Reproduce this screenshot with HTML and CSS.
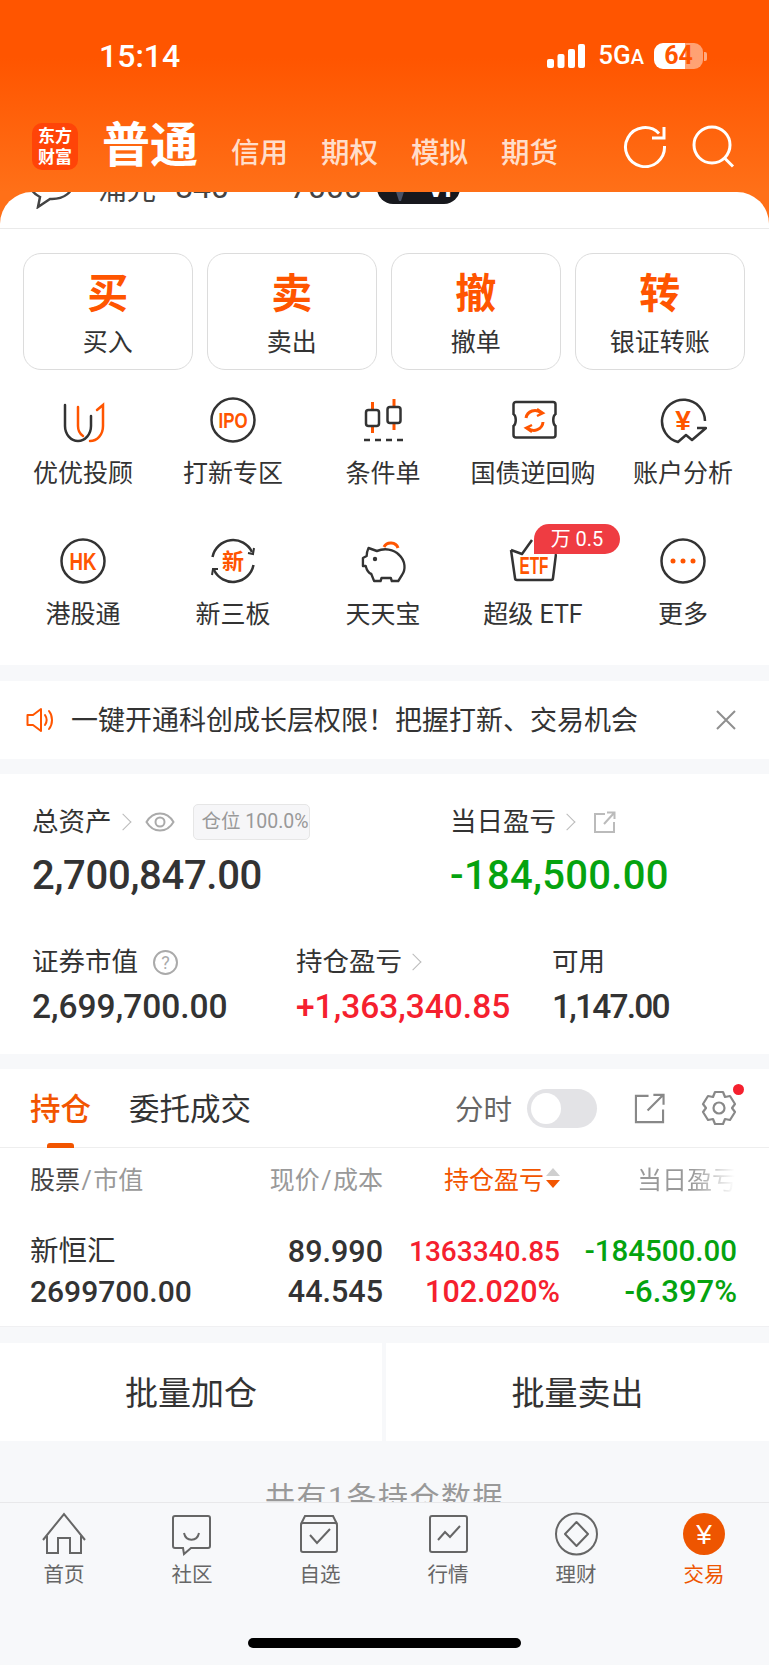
FILE: index.html
```html
<!DOCTYPE html>
<html lang="zh-CN">
  <head>
    <meta charset="UTF-8" />
    <meta name="viewport" content="width=device-width, initial-scale=1.0" />
    <title>交易</title>
    <link rel="stylesheet" href="styles.css">
  </head>
  <body>
    <div class="page">
      <div class="header">
        <div class="status">
          <span class="time">15:14</span>
          <div class="status-right">
            <svg class="signal" viewBox="0 0 38 24" fill="#fff">
              <rect x="0" y="15" width="7" height="9" rx="2"/>
              <rect x="10.500" y="10" width="7" height="14" rx="2"/>
              <rect x="21" y="5" width="7" height="19" rx="2"/>
              <rect x="31" y="0" width="7" height="24" rx="2"/>
            </svg>
            <span class="net">5G<small>A</small></span>
            <span class="battery">64</span>
            <span class="nib"></span>
          </div>
        </div>
        <div class="nav">
          <div class="logo">东方<br>财富</div>
          <span class="nav-main">普通</span>
          <span class="nav-sub">信用</span>
          <span class="nav-sub">期权</span>
          <span class="nav-sub">模拟</span>
          <span class="nav-sub">期货</span>
          <div class="nav-icons">
            <svg width="44" height="44" viewBox="0 0 44 44" fill="none" stroke="#fff" stroke-width="3">
              <path d="M36 9.500A19.500 19.500 0 1 0 41.500 22"/>
              <path d="M29 14H41V3"/>
            </svg>
            <svg width="45" height="45" viewBox="0 0 45 45" fill="none" stroke="#fff" stroke-width="3">
              <circle cx="21" cy="21" r="18"/>
              <path d="M33.500 34L42 42.500"/>
            </svg>
          </div>
        </div>
      </div>

      <div class="card-wrap">
        <div class="ticker">
          <div class="ticker-row">
            <svg class="bubble" width="46" height="44" viewBox="0 0 46 44" fill="none" stroke="#444" stroke-width="2.500">
              <path d="M23 2C11 2 2 9 2 18c0 6 4 11 10 14l-2 10 12-8h2c12 0 21-7 21-16S35 2 23 2z"/>
            </svg>
            <span class="ticker-name">涌光</span>
            <span class="ticker-a">840</span>
            <span class="ticker-b">7000</span>
            <span class="ticker-pill">
              <svg width="30" height="30" viewBox="0 0 30 30"><path d="M5 0h20l-9 28h-2z" fill="#4a5266"/></svg>
              <b>VI</b>
            </span>
            <span class="ticker-more"></span>
          </div>
        </div>
      </div>

      <div class="panel">
        <div class="actions">
          <div class="action"><b>买</b><span>买入</span></div>
          <div class="action"><b>卖</b><span>卖出</span></div>
          <div class="action"><b>撤</b><span>撤单</span></div>
          <div class="action"><b>转</b><span>银证转账</span></div>
        </div>

        <div class="grid">
          <div class="cell">
            <svg class="ico" viewBox="0 0 48 48" fill="none" stroke-width="2.500" stroke-linecap="round">
              <path d="M6 9V30a13 15 0 0 0 26 0V20" stroke="#333"/>
              <path d="M19 11V30c0 6 2 8 5 10" class="o"/>
              <path d="M38 14l6-5V30c0 9-6 15-13 15" class="o"/>
            </svg>
            <span>优优投顾</span>
          </div>
          <div class="cell">
            <svg class="ico" viewBox="0 0 48 48">
              <circle cx="24" cy="24" r="21.500" fill="none" stroke="#333" stroke-width="2.500"/>
              <text x="24" y="32" class="ico-text" font-size="22" textLength="29" lengthAdjust="spacingAndGlyphs">IPO</text>
            </svg>
            <span>打新专区</span>
          </div>
          <div class="cell">
            <svg class="ico" viewBox="0 0 48 48" fill="none" stroke-width="2.500">
              <path d="M13.500 6V37M35 3V34" class="o" stroke-width="3"/>
              <rect x="7" y="14" width="13" height="16" rx="2.500" fill="#fff" stroke="#333"/>
              <rect x="28.500" y="11" width="13" height="16" rx="2.500" fill="#fff" stroke="#333"/>
              <path d="M5 44H45" stroke="#333" stroke-dasharray="6 5"/>
            </svg>
            <span>条件单</span>
          </div>
          <div class="cell">
            <svg class="ico" viewBox="0 0 48 48" fill="none" stroke-width="2.500">
              <path d="M7 6H44a2.500 2.500 0 0 1 2.500 2.500V18c-3 2-3 10 0 12v9a2.500 2.500 0 0 1-2.500 2.500H7A2.500 2.500 0 0 1 4.500 39V30c3-2 3-10 0-12V8.500A2.500 2.500 0 0 1 7 6z" stroke="#333"/>
              <path d="M17 22a9 9 0 0 1 15-5M34 26a9 9 0 0 1-15 6" class="o" stroke-width="3"/>
              <path d="M28 13l6 4-6 3M23 29l-6 3 6 4" class="o" stroke-width="2.500"/>
            </svg>
            <span>国债逆回购</span>
          </div>
          <div class="cell">
            <svg class="ico" viewBox="0 0 48 48" fill="none" stroke="#333" stroke-width="2.500" stroke-linejoin="round">
              <path d="M46 25A21.500 21.500 0 1 0 19 46L27 39l6 5L47 32H38"/>
              <text x="24" y="34" class="ico-text" font-size="28" stroke="none">¥</text>
            </svg>
            <span>账户分析</span>
          </div>

          <div class="cell">
            <svg class="ico" viewBox="0 0 48 48">
              <circle cx="24" cy="24" r="21.500" fill="none" stroke="#333" stroke-width="2.500"/>
              <text x="24" y="32.500" class="ico-text" font-size="23.500" textLength="27" lengthAdjust="spacingAndGlyphs">HK</text>
            </svg>
            <span>港股通</span>
          </div>
          <div class="cell">
            <svg class="ico" viewBox="0 0 48 48" fill="none" stroke="#333" stroke-width="2.500">
              <path d="M3.500 20A21 21 0 0 1 43 15M44.500 28A21 21 0 0 1 5 33"/>
              <path d="M39 16l5 1 1-6M9 32l-5 0-1 6" stroke-width="2"/>
              <text x="24" y="32" class="ico-text ico-cjk" font-size="22" stroke="none">新</text>
            </svg>
            <span>新三板</span>
          </div>
          <div class="cell">
            <svg class="ico" viewBox="0 0 48 48" fill="none" stroke="#333" stroke-width="2.500" stroke-linejoin="round">
              <path d="M25 10a7.500 7 0 0 1 14 1" class="o" stroke-width="3"/>
              <path transform="translate(3 0) scale(.93 1)" d="M7 11l9 3c8-3 18-2 24 4 7 6 7 15 3 20l-4 6h-7l-1-3H21l-1 3h-7l-3-7c-3-1-5-4-6-8H1v-8l4-2c0-3 1-6 2-8z"/>
              <circle cx="16" cy="22" r="2.200" fill="#333" stroke="none"/>
            </svg>
            <span>天天宝</span>
          </div>
          <div class="cell">
            <svg class="ico" viewBox="0 0 48 48" fill="none" stroke="#333" stroke-width="2.500" stroke-linejoin="round">
              <path d="M2 13l11 4L23 3M2 13l4 28q0 2 2 2H42q2 0 2-2L47 17"/>
              <text x="25" y="37" class="ico-text" font-size="23" textLength="29" lengthAdjust="spacingAndGlyphs" stroke="none">ETF</text>
            </svg>
            <span>超级 ETF</span>
            <em class="tag">万 0.5</em>
          </div>
          <div class="cell">
            <svg class="ico" viewBox="0 0 48 48">
              <circle cx="24" cy="24" r="21.500" fill="none" stroke="#333" stroke-width="2.500"/>
              <circle cx="14" cy="24" r="2.500" fill="#ff5500"/>
              <circle cx="24" cy="24" r="2.500" fill="#ff5500"/>
              <circle cx="34" cy="24" r="2.500" fill="#ff5500"/>
            </svg>
            <span>更多</span>
          </div>
        </div>
      </div>

      <div class="notice">
        <svg width="28" height="26" viewBox="0 0 28 26" fill="none" stroke="#ff5500" stroke-width="2" stroke-linejoin="round">
          <path d="M1.500 8H7L15 2V24L7 18H1.500z"/>
          <path d="M19 8c2 3 2 7 0 10M23 4c4 5 4 13 0 18" stroke-linecap="round"/>
        </svg>
        <span class="notice-text">一键开通科创成长层权限！把握打新、交易机会</span>
        <svg class="notice-close" width="20" height="20" viewBox="0 0 20 20" stroke="#8f8f8f" stroke-width="2">
          <path d="M1 1L19 19M19 1L1 19"/>
        </svg>
      </div>

      <div class="assets">
        <div class="asset-row">
          <div class="asset-top">
            <div class="asset-label">总资产<i class="chev"></i>
              <svg class="eye" width="30" height="20" viewBox="0 0 30 20" fill="none" stroke="#aaa" stroke-width="2">
                <path d="M1.500 10C5 4 10 1.500 15 1.500S25 4 28.500 10C25 16 20 18.500 15 18.500S5 16 1.500 10z"/>
                <circle cx="15" cy="10" r="4.500"/>
              </svg>
              <span class="pos">仓位 100.0%</span>
            </div>
            <div class="asset-big left-big">2,700,847.00</div>
          </div>
          <div>
            <div class="asset-label">当日盈亏<i class="chev"></i>
              <svg class="open" width="23" height="22" viewBox="0 0 23 22" fill="none" stroke="#bbb" stroke-width="2">
                <path d="M12 3H2V21H21V11M11 13L21 2M14 1.500H21.500V8"/>
              </svg>
            </div>
            <div class="asset-big right-big green">-184,500.00</div>
          </div>
        </div>
        <div class="asset-row asset-row2">
          <div class="asset-c1">
            <div class="asset-label">证券市值
              <span class="help">?</span>
            </div>
            <div class="asset-val">2,699,700.00</div>
          </div>
          <div class="asset-c2">
            <div class="asset-label">持仓盈亏<i class="chev"></i></div>
            <div class="asset-val red">+1,363,340.85</div>
          </div>
          <div>
            <div class="asset-label">可用</div>
            <div class="asset-val tight">1,147.00</div>
          </div>
        </div>
      </div>

      <div class="holdings">
        <div class="tabs">
          <span class="tab active">持仓</span>
          <span class="tab">委托成交</span>
          <div class="tabs-right">
            <span class="fen">分时</span>
            <span class="toggle"><i></i></span>
            <svg class="tab-open" width="31" height="31" viewBox="0 0 32 32" fill="none" stroke="#888" stroke-width="2.200">
              <path d="M15 3H2V30H30V17M14 18L30 2M20 2H30.500V12"/>
            </svg>
            <span class="gear">
              <svg width="36" height="36" viewBox="0 0 36 36" fill="none" stroke="#888" stroke-width="2.200" stroke-linejoin="round">
                <path d="M14 2h8l2 5 5-1 5 8-3 4 3 4-5 8-5-1-2 5h-8l-2-5-5 1-5-8 3-4-3-4 5-8 5 1z"/>
                <circle cx="18" cy="18" r="5.500"/>
              </svg>
              <i class="dot"></i>
            </span>
          </div>
        </div>
        <div class="thead">
          <div><span class="dark">股票</span><i class="sl">/</i>市值</div>
          <div class="num">现价<i class="sl">/</i>成本</div>
          <div class="num sort">持仓盈亏<span class="arrows"><i class="up"></i><i class="down"></i></span></div>
          <div class="num fade">当日盈亏</div>
        </div>
        <div class="trow">
          <div class="name">新恒汇</div>
          <div class="num big">89.990</div>
          <div class="num red small">1363340.85</div>
          <div class="num green wide">-184500.00</div>
        </div>
        <div class="trow">
          <div class="mv">2699700.00</div>
          <div class="num big">44.545</div>
          <div class="num red big">102.020%</div>
          <div class="num green pct">-6.397%</div>
        </div>
      </div>

      <div class="batch">
        <div class="batch-l">批量加仓</div>
        <div class="batch-r">批量卖出</div>
      </div>

      <div class="count">共有1条持仓数据</div>

      <div class="tabbar">
        <div class="tabbar-row">
          <div class="bar-item">
            <svg class="bar-ico" viewBox="0 0 48 48"><path d="M3 30L24 4L45 30M7 26V43H18V28H30V43H41V26"/></svg>
            <span>首页</span>
          </div>
          <div class="bar-item">
            <svg class="bar-ico" viewBox="0 0 48 48">
              <path d="M7 6H40a2 2 0 0 1 2 2V36a2 2 0 0 1-2 2H23l-7 6-1-6H7a2 2 0 0 1-2-2V8a2 2 0 0 1 2-2z"/>
              <path d="M16 23c2 9 13 9 15 0"/>
            </svg>
            <span>社区</span>
          </div>
          <div class="bar-item">
            <svg class="bar-ico" viewBox="0 0 48 48">
              <path d="M5 14L9 6H37L41 14"/>
              <rect x="5" y="13" width="36" height="29" rx="2"/>
              <path d="M14 25l7 8 13-14"/>
            </svg>
            <span>自选</span>
          </div>
          <div class="bar-item">
            <svg class="bar-ico" viewBox="0 0 48 48">
              <rect x="6" y="6" width="37" height="36" rx="2"/>
              <path d="M14 30l7-8 5 5 10-11"/>
            </svg>
            <span>行情</span>
          </div>
          <div class="bar-item">
            <svg class="bar-ico" viewBox="0 0 48 48">
              <circle cx="24.500" cy="24" r="20.500"/>
              <path d="M24.500 12L36 24L24.500 36L13 24z" stroke-linejoin="round"/>
            </svg>
            <span>理财</span>
          </div>
          <div class="bar-item current">
            <svg class="bar-ico" viewBox="0 0 48 48">
              <circle cx="24" cy="24" r="21" fill="#ee5500" stroke="none"/>
              <text x="24" y="33.500" class="coin">¥</text>
            </svg>
            <span>交易</span>
          </div>
        </div>
        <div class="home"></div>
      </div>
    </div>
  </body>
</html>
```

FILE: styles.css
```css
* {
  box-sizing: border-box;
}

body {
  margin: 0;
  background: #f7f8fa;
  font-family: "Roboto", "Noto Sans CJK SC", sans-serif;
  color: #333;
}

i, em {
  font-style: normal;
}

.page {
  width: 769px;
  height: 1665px;
  overflow: hidden;
  display: flex;
  flex-direction: column;
}

.o {
  stroke: #ff5500;
}

.red {
  color: #f5202e;
}

.green {
  color: #05a30f;
}

/* header */
.header {
  height: 192px;
  flex: none;
  padding-top: 40px;
  background: linear-gradient(#ff5500 30%, #ff7018);
  color: #fff;
}

.status {
  display: flex;
  align-items: center;
  height: 32px;
  padding: 0 62px 0 99px;
}

.time {
  font-size: 32px;
  font-weight: 500;
}

.status-right {
  margin-left: auto;
  display: flex;
  align-items: center;
}

.signal {
  width: 38px;
  height: 24px;
}

.net {
  margin-left: 13px;
  font-size: 26px;
  font-weight: 500;
  line-height: 30px;
}

.net small {
  font-size: 20px;
}

.battery {
  margin-left: 10px;
  width: 49px;
  height: 26px;
  border-radius: 9px;
  background: linear-gradient(90deg, #fff 64%, rgba(255, 255, 255, 0.45) 64%);
  color: #ff5500;
  font-size: 25px;
  font-weight: 700;
  line-height: 26px;
  text-align: center;
}

.nib {
  width: 3px;
  height: 9px;
  margin-left: 1px;
  background: rgba(255, 255, 255, 0.5);
  border-radius: 0 2px 2px 0;
}

.nav {
  display: flex;
  align-items: center;
  height: 48px;
  margin-top: 50px;
  padding: 0 33px 0 32px;
}

.logo {
  width: 46px;
  height: 47px;
  border-radius: 10px;
  background: #ff4408;
  font-size: 17px;
  font-weight: 700;
  line-height: 21px;
  text-align: center;
  padding-top: 3px;
}

.nav-main {
  margin: 0 33px 0 24px;
  font-size: 48px;
  font-weight: 700;
  line-height: 48px;
}

.nav-sub {
  margin: 15px 33px 0 0;
  font-size: 28.500px;
  line-height: 34px;
  color: rgba(255, 255, 255, 0.8);
  font-weight: 500;
}

.nav-icons {
  margin-left: auto;
  display: flex;
  align-items: center;
  gap: 24px;
}

/* clipped ticker */
.card-wrap {
  background: #ff7018;
  flex: none;
}

.ticker {
  height: 37px;
  overflow: hidden;
  background: #fff;
  border-radius: 32px 32px 0 0;
  border-bottom: 1.500px solid #eaeaea;
}

.ticker-row {
  display: flex;
  align-items: center;
  height: 44px;
  margin-top: -27px;
  padding-left: 28px;
  font-size: 29px;
  color: #444;
}

.bubble {
  flex: none;
}

.ticker-name {
  margin-left: 24px;
  width: 77px;
}

.ticker-a {
  width: 115px;
  font-size: 32px;
}

.ticker-b {
  width: 87px;
  font-size: 32px;
}

.ticker-pill {
  display: flex;
  align-items: center;
  justify-content: center;
  gap: 12px;
  width: 83px;
  height: 32px;
  border-radius: 0 0 16px 16px;
  background: #17181d;
  color: #fff;
  margin-top: 2px;
  font-size: 26px;
}

.ticker-more {
  margin-left: auto;
  margin-right: 46px;
  width: 2px;
  height: 30px;
  margin-top: -24px;
  background: #444;
}

/* buttons + grid */
.panel {
  background: #fff;
  flex: none;
}

.actions {
  display: grid;
  grid-template-columns: repeat(4, 169.500px);
  gap: 14.500px;
  padding: 24px 0 0 23px;
}

.action {
  height: 117px;
  padding-top: 17px;
  border: 1.500px solid #dcdcdc;
  border-radius: 18px;
  display: flex;
  flex-direction: column;
  align-items: center;
  gap: 11px;
}

.action b {
  font-size: 41px;
  line-height: 46px;
  color: #ff5500;
}

.action span {
  font-size: 25px;
  line-height: 30px;
}

.grid {
  display: grid;
  grid-template-columns: repeat(5, 150px);
  row-gap: 48px;
  padding: 26px 0 35px 8px;
}

.cell {
  position: relative;
  display: flex;
  flex-direction: column;
  align-items: center;
  gap: 15px;
  font-size: 25px;
  line-height: 30px;
}

.ico {
  width: 48px;
  height: 48px;
}

.ico-text {
  font-family: "Liberation Sans", sans-serif;
  font-weight: 700;
  fill: #ff5500;
  text-anchor: middle;
}

.ico-cjk {
  font-family: "Noto Sans CJK SC", sans-serif;
}

.tag {
  position: absolute;
  top: -13px;
  left: 76px;
  width: 86px;
  height: 30px;
  border-radius: 15px 15px 15px 0;
  background: #ef3c42;
  color: #fff;
  font-size: 20px;
  line-height: 30px;
  text-align: center;
}

/* notice */
.notice {
  display: flex;
  align-items: center;
  flex: none;
  height: 78px;
  margin-top: 16px;
  padding: 0 33px 0 26px;
  background: #fff;
}

.notice-text {
  margin-left: 17px;
  padding-bottom: 4px;
  font-size: 27px;
}

.notice-close {
  margin-left: auto;
}

/* assets */
.assets {
  flex: none;
  height: 280px;
  margin-top: 15px;
  padding: 33px 0 0 32px;
  background: #fff;
}

.asset-row {
  display: flex;
}

.asset-top {
  width: 418px;
}

.asset-label {
  display: flex;
  align-items: center;
  height: 30px;
  font-size: 26.500px;
  line-height: 30px;
}

.chev {
  width: 12px;
  height: 12px;
  margin-left: 5px;
  border-top: 1.500px solid #bbb;
  border-right: 1.500px solid #bbb;
  transform: rotate(45deg);
}

.eye {
  margin-left: 16px;
  flex: none;
}

.pos {
  margin-left: 18px;
  width: 117px;
  height: 36px;
  padding-left: 8px;
  background: #f6f6f8;
  border: 1.500px solid #e6e6e6;
  border-radius: 5px;
  color: #999;
  font-size: 19.500px;
  line-height: 33px;
  white-space: nowrap;
}

.open {
  margin-left: 20px;
}

.asset-big {
  margin-top: 14px;
  font-size: 40px;
  font-weight: 500;
  line-height: 50px;
}

.left-big {
  letter-spacing: -0.300px;
}

.right-big {
  letter-spacing: 0.300px;
}

.asset-row2 {
  margin-top: 46px;
}

.asset-c1 {
  width: 264px;
}

.asset-c2 {
  width: 256px;
}

.help {
  margin-left: 15px;
  width: 25px;
  height: 25px;
  border: 2px solid #aaa;
  border-radius: 50%;
  color: #aaa;
  font-size: 18px;
  line-height: 21px;
  text-align: center;
}

.asset-val {
  margin-top: 9px;
  font-size: 33.500px;
  font-weight: 500;
  line-height: 42px;
}

.tight {
  letter-spacing: -1.800px;
}

/* holdings */
.holdings {
  flex: none;
  height: 258px;
  margin-top: 15px;
  background: #fff;
  border-bottom: 1px solid #f0f0f2;
}

.tabs {
  display: flex;
  align-items: center;
  height: 79px;
  padding: 0 32px 0 30px;
  border-bottom: 1.500px solid #eeeeee;
}

.tab {
  position: relative;
  margin-right: 38px;
  padding-top: 4px;
  font-size: 30.500px;
  line-height: 40px;
}

.tab.active {
  color: #f25500;
  font-weight: 500;
}

.tab.active::after {
  content: "";
  position: absolute;
  left: 17px;
  bottom: -18px;
  width: 27px;
  height: 5px;
  border-radius: 3px 3px 0 0;
  background: #f25500;
}

.tabs-right {
  margin-left: auto;
  display: flex;
  align-items: center;
}

.fen {
  padding-bottom: 2px;
  font-size: 28.500px;
  color: #666;
}

.toggle {
  display: flex;
  align-items: center;
  width: 70px;
  height: 39px;
  margin-left: 15px;
  padding-left: 4px;
  border-radius: 20px;
  background: #e3e3e6;
}

.toggle i {
  width: 30px;
  height: 31px;
  border-radius: 50%;
  background: #fff;
}

.tab-open {
  margin-left: 37px;
}

.gear {
  position: relative;
  display: flex;
  margin-left: 36px;
}

.dot {
  position: absolute;
  top: -6px;
  right: -7px;
  width: 11px;
  height: 11px;
  border-radius: 50%;
  background: #f5202e;
}

.thead,
.trow {
  display: grid;
  grid-template-columns: 170px 183px 177px 177px;
  padding-left: 30px;
}

.thead {
  height: 63px;
  padding-bottom: 4px;
  align-items: center;
  font-size: 25px;
  color: #999;
}

.dark {
  color: #444;
}

.sl {
  margin: 0 1.500px;
}

.num {
  text-align: right;
  white-space: nowrap;
}

.sort {
  display: flex;
  justify-content: flex-end;
  align-items: center;
  color: #f25500;
}

.arrows {
  display: flex;
  flex-direction: column;
  gap: 4px;
  margin-left: 2px;
}

.arrows i {
  width: 0;
  height: 0;
  border-left: 7px solid transparent;
  border-right: 7px solid transparent;
}

.up {
  border-bottom: 8px solid #cfcfcf;
}

.down {
  border-top: 8px solid #f25500;
}

.fade {
  background: linear-gradient(90deg, #999 55%, #fff 98%);
  -webkit-background-clip: text;
  background-clip: text;
  color: transparent;
  justify-self: end;
}

.trow {
  height: 42px;
  align-items: center;
  font-size: 29px;
  font-weight: 500;
}

.thead + .trow {
  margin-top: 17px;
}

.name {
  padding-bottom: 5px;
  font-size: 28.500px;
  font-weight: 400;
}

.mv {
  font-size: 30px;
}

.big {
  font-size: 30.500px;
}

.small {
  font-size: 28px;
}

.wide {
  font-size: 29.500px;
}

.pct {
  font-size: 31px;
}

/* batch */
.batch {
  display: flex;
  gap: 4px;
  flex: none;
  height: 98px;
  margin-top: 16px;
  font-size: 33px;
  line-height: 102px;
  text-align: center;
}

.batch-l {
  width: 382px;
  background: #fff;
}

.batch-r {
  flex: 1;
  background: #fff;
}

.count {
  flex: none;
  height: 61px;
  overflow: hidden;
  padding-top: 41px;
  color: #999;
  font-size: 30px;
  letter-spacing: 1.500px;
  line-height: 32px;
  text-align: center;
}

/* bottom bar */
.tabbar {
  flex: 1;
  background: #f7f8fa;
  border-top: 1.500px solid #e8e8ea;
}

.tabbar-row {
  display: grid;
  grid-template-columns: repeat(6, 128px);
  padding-top: 7px;
}

.bar-item {
  display: flex;
  flex-direction: column;
  align-items: center;
  gap: 3px;
  font-size: 20.500px;
  line-height: 28px;
  color: #666;
}

.bar-ico {
  width: 48px;
  height: 48px;
  fill: none;
  stroke: #666;
  stroke-width: 2;
}

.current {
  color: #ee5500;
}

.coin {
  font-family: "Liberation Sans", sans-serif;
  font-size: 28px;
  fill: #fff;
  stroke: none;
  text-anchor: middle;
}

.home {
  width: 273px;
  height: 10px;
  margin: 49px 0 0 248px;
  border-radius: 5px;
  background: #000;
}
```
